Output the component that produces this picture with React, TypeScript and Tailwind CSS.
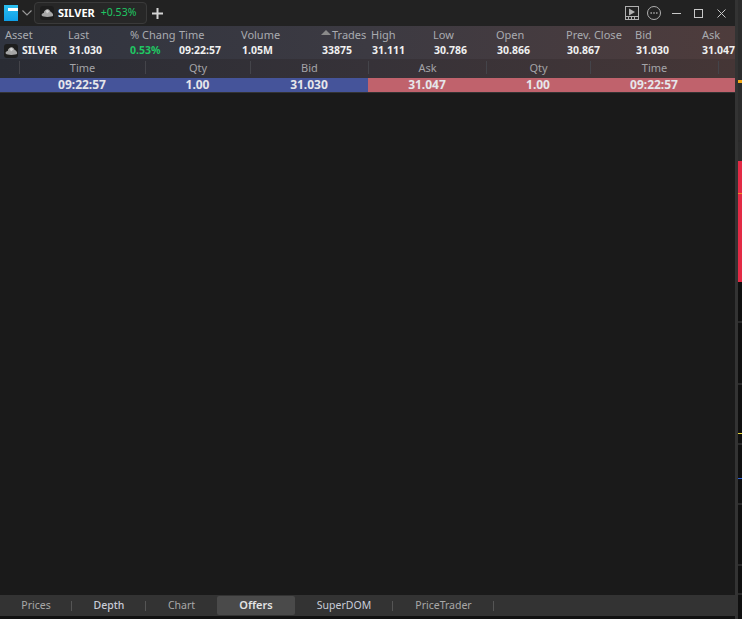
const columns = [
  { label: "Asset", value: "SILVER", width: "w-[68px]", pad: "pl-[5px]", valuePad: "pl-0" },
  { label: "Last", value: "31.030", width: "w-[62px]", pad: "pl-0", valuePad: "pl-[1px]" },
  { label: "% Chang", value: "0.53%", width: "w-[49px]", pad: "pl-0", valuePad: "pl-0" },
  { label: "Time", value: "09:22:57", width: "w-[62px]", pad: "pl-0", valuePad: "pl-0" },
  { label: "Volume", value: "1.05M", width: "w-[80px]", pad: "pl-0", valuePad: "pl-[1px]" },
  { label: "Trades", value: "33875", width: "w-[50px]", pad: "pl-[11px]", valuePad: "pl-[1px]" },
  { label: "High", value: "31.111", width: "w-[62px]", pad: "pl-0", valuePad: "pl-[1px]" },
  { label: "Low", value: "30.786", width: "w-[63px]", pad: "pl-0", valuePad: "pl-[1px]" },
  { label: "Open", value: "30.866", width: "w-[70px]", pad: "pl-0", valuePad: "pl-[1px]" },
  { label: "Prev. Close", value: "30.867", width: "w-[69px]", pad: "pl-0", valuePad: "pl-[1px]" },
  { label: "Bid", value: "31.030", width: "w-[67px]", pad: "pl-0", valuePad: "pl-[1px]" },
  { label: "Ask", value: "31.047", width: "w-[33px]", pad: "pl-0", valuePad: "pl-0" },
];

const offerColumns = [
  { label: "Time", value: "09:22:57", width: "w-[126px]" },
  { label: "Qty", value: "1.00", width: "w-[105px]" },
  { label: "Bid", value: "31.030", width: "w-[118px]" },
  { label: "Ask", value: "31.047", width: "w-[118px]" },
  { label: "Qty", value: "1.00", width: "w-[104px]" },
  { label: "Time", value: "09:22:57", width: "w-[128px]" },
];

const tabs = [
  { label: "Prices", width: "w-[72px]", className: "text-[10.5px] text-[#a8a8a8]", sep: true },
  { label: "Depth", width: "w-[74px]", className: "text-[10.5px] text-[#c8ccd8] font-medium", sep: true },
  { label: "Chart", width: "w-[71px]", className: "text-[10.5px] text-[#a8a8a8]", sep: false },
  { label: "Offers", width: "w-[78px]", className: "text-[#e4e4e4] font-semibold bg-[#4a4a4a] rounded-[2px]", sep: false },
  { label: "SuperDOM", width: "w-[98px]", className: "text-[10.5px] text-[#c8ccd8]", sep: true },
  { label: "PriceTrader", width: "w-[101px]", className: "text-[10.5px] text-[#a8a8a8]", sep: true },
];

const ticks = ["top-[140px]", "top-[321px]", "top-[383px]", "top-[443px]", "top-[503px]", "top-[564px]", "top-[593px]"];

function SilverIcon() {
  return (
    <span className="flex h-[14px] w-[14px] shrink-0 items-center justify-center rounded-[3px] bg-[#1d1d1d]">
      <svg viewBox="0 0 14 10" className="h-[10px] w-[13px]">
        <path d="M1 8C0 6 2 5 3 5 3 3 5 1 7 1c2 0 3 2 3.500 3 1.500.5 3 2.500 2.500 4-.5 1.500-11 1.800-12 0Z" fill="#a6a6a6" />
        <path d="M5 2.500 7 1.500 9 3.500 6.500 5.500Z" fill="#d4d4d4" />
      </svg>
    </span>
  );
}

export default function App() {
  return (
    <div className="relative flex h-[619px] w-[742px] overflow-hidden bg-[#101010] font-['Noto_Sans',sans-serif] text-[11px]">
      <div className="flex w-[738px] flex-col border-r-[3px] border-[#333333]">
        {/* title bar */}
        <div className="flex h-[26px] items-center bg-[#222222]">
          <span className="ml-[4px] flex h-[16px] w-[14px] flex-col bg-gradient-to-b from-[#2cc0f0] to-[#0e9fe8]">
            <span className="mt-[3px] h-[3px] w-[10px] self-end bg-white" />
          </span>
          <svg viewBox="0 0 10 6" className="ml-[4px] h-[6px] w-[10px] text-[#9a9a9a]" fill="none" stroke="currentColor" strokeWidth="1.1">
            <path d="M.5.5 5 5 9.500.5" />
          </svg>
          <div className="ml-[2px] flex h-[22px] w-[113px] items-center rounded-[4px] border border-[#3a3a3a] bg-[#272727] pl-[5px]">
            <SilverIcon />
            <span className="ml-[4px] font-bold text-white">SILVER</span>
            <span className="ml-[6px] text-[10.5px] text-[#1fc763]">+0.53%</span>
          </div>
          <svg viewBox="0 0 11 11" className="ml-[5px] h-[11px] w-[11px]" stroke="#d4d4d4" strokeWidth="2">
            <path d="M5.500 0v11M0 5.500h11" />
          </svg>
          <div className="ml-auto flex items-center">
            <svg viewBox="0 0 14 14" className="h-[14px] w-[14px]" fill="none" stroke="#b0b0b0">
              <rect x=".5" y=".5" width="13" height="13" />
              <path d="M.5 10.500h13M3.500 10.500v3M6.500 10.500v3M9.500 10.500v3" />
              <path d="M4 2.500l6 3.500-6 3.500Z" fill="#b0b0b0" stroke="none" />
            </svg>
            <svg viewBox="0 0 14 14" className="ml-[8px] h-[14px] w-[14px]" fill="none" stroke="#b0b0b0">
              <circle cx="7" cy="7" r="6.500" />
              <path d="M3.500 7h1.400M6.300 7h1.400M9.100 7h1.400" strokeWidth="1.600" />
            </svg>
            <svg viewBox="0 0 9 1" className="ml-[11px] h-[1px] w-[9px]" stroke="#c8c8c8">
              <path d="M0 .5h9" />
            </svg>
            <svg viewBox="0 0 9 9" className="ml-[13px] h-[9px] w-[9px]" fill="none" stroke="#c8c8c8">
              <rect x=".5" y=".5" width="8" height="8" />
            </svg>
            <svg viewBox="0 0 9 9" className="mr-[9px] ml-[14px] h-[9px] w-[9px]" fill="none" stroke="#c8c8c8">
              <path d="M.5.5l8 8M8.500.5l-8 8" />
            </svg>
          </div>
        </div>

        {/* summary strip */}
        <div className="h-[33px] bg-gradient-to-r from-[#30343f] via-[#3c3a42] to-[#4e3c3c]">
          <div className="flex h-[16px] items-end text-[#a9abb0]">
            {columns.map((col) => (
              <div key={col.label} className={`${col.width} ${col.pad} relative shrink-0 leading-[14px] whitespace-nowrap`}>
                {col.label === "Trades" ? (
                  <span className="absolute top-[2px] left-0 h-0 w-0 border-x-[5px] border-b-[5px] border-x-transparent border-b-[#8a8a8a]" />
                ) : null}
                {col.label}
              </div>
            ))}
          </div>
          <div className="mt-[1px] flex h-[15px] items-center text-[10.5px] font-bold text-[#f0f0f0]">
            {columns.map((col) =>
              col.label === "Asset" ? (
                <div key={col.label} className={`${col.width} flex shrink-0 items-center pl-[4px]`}>
                  <SilverIcon />
                  <span className="ml-[4px]">{col.value}</span>
                </div>
              ) : (
                <div
                  key={col.label}
                  className={`${col.width} ${col.valuePad} shrink-0 whitespace-nowrap ${col.label === "% Chang" ? "text-[#1fc763]" : ""}`}
                >
                  {col.value}
                </div>
              ),
            )}
          </div>
        </div>

        {/* offers table */}
        <div className="flex h-[19px] bg-gradient-to-r from-[#2a2c34] via-[#363238] to-[#453636] pt-[2px] text-[#a4a4a8]">
          <div className="w-[19px] shrink-0" />
          {offerColumns.map((col, i) => (
            <div key={i} className={`${col.width} flex h-[13px] shrink-0 items-center justify-center border-l border-[#44444a] leading-none`}>
              {col.label}
            </div>
          ))}
          <div className="h-[13px] w-[17px] shrink-0 border-l border-[#44444a]" />
        </div>
        <div className="flex h-[15px] border-b border-[#333333] text-[12px] font-bold text-[#e6e6ea]">
          <div className="flex w-[368px] items-center bg-[#45549a] pl-[19px]">
            {offerColumns.slice(0, 3).map((col, i) => (
              <span key={i} className={`${col.width} shrink-0 text-center`}>
                {col.value}
              </span>
            ))}
          </div>
          <div className="flex w-[367px] items-center bg-[#c0626c]">
            {offerColumns.slice(3).map((col, i) => (
              <span key={i} className={`${col.width} shrink-0 text-center`}>
                {col.value}
              </span>
            ))}
          </div>
        </div>
        <div className="flex-1 bg-[#1a1a1a]" />

        {/* bottom tabs */}
        <div className="flex h-[21px] items-center bg-[#333333]">
          {tabs.map((tab) => (
            <div key={tab.label} className={`${tab.width} relative flex h-[19px] shrink-0 items-center justify-center ${tab.className}`}>
              {tab.label}
              {tab.sep ? <span className="absolute top-[5px] right-0 h-[10px] w-[1px] bg-[#555555]" /> : null}
            </div>
          ))}
        </div>
        <div className="h-[3px] bg-[#111111]" />
      </div>

      {/* chart peeking out behind the window */}
      <div className="absolute top-0 right-0 h-[161px] w-[4px] bg-[#2c2c2c]" />
      <div className="absolute top-[80px] right-0 h-[3px] w-[4px] bg-[#f0a818]" />
      <div className="absolute top-[161px] right-0 h-[121px] w-[4px] bg-[#e32a45]" />
      <div className="absolute top-[193px] right-0 h-[1px] w-[4px] bg-[#f08a28]" />
      {ticks.map((top) => (
        <div key={top} className={`absolute ${top} right-0 h-[2px] w-[4px] bg-[#2a2a2a]`} />
      ))}
      <div className="absolute top-[433px] right-0 h-[1px] w-[4px] bg-[#e8d838]" />
      <div className="absolute top-[478px] right-0 h-[1px] w-[4px] bg-[#2b62d8]" />
    </div>
  );
}
